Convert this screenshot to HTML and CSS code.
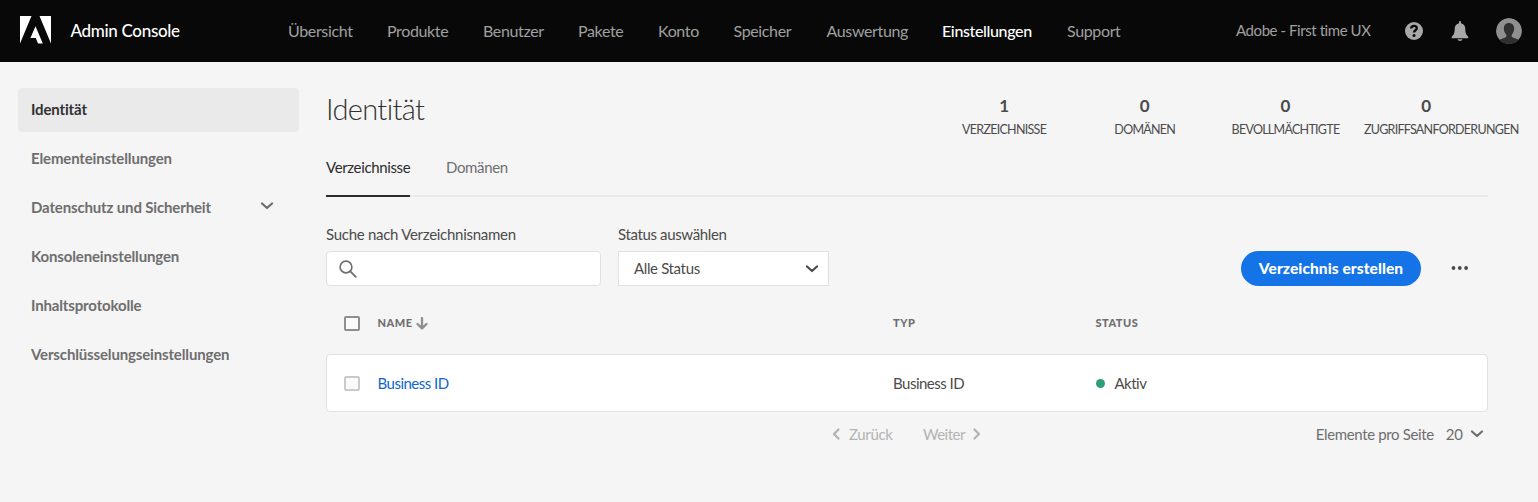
FILE: index.html
```html
<!DOCTYPE html>
<html lang="de">
<head>
<meta charset="utf-8">
<title>Admin Console</title>
<link rel="stylesheet" href="styles.css">
</head>
<body>
<header class="topbar">
  <svg class="logo" width="31" height="28" viewBox="0 0 31 28"><path fill="#fff" d="M0 0h11.500L0 27.500zM19.500 0H31v27.500zM15.500 10.300L22.800 27.500h-4.800l-2.200-5.500H10.400z"/></svg>
  <span class="brand">Admin Console</span>
  <nav class="nav">
    <a>Übersicht</a><a>Produkte</a><a>Benutzer</a><a>Pakete</a><a>Konto</a><a>Speicher</a><a>Auswertung</a><a class="current">Einstellungen</a><a>Support</a>
  </nav>
  <div class="account">
    <span class="org">Adobe - First time UX</span>
    <svg class="help" width="18" height="18" viewBox="0 0 18 18"><circle cx="9" cy="9" r="9" fill="#a8a8a8"/><path d="M6.100 6.500C6.300 4.500 7.500 3.800 9 3.800c1.700 0 2.800 1 2.800 2.400C11.800 8.200 9 8.300 9 10.600" fill="none" stroke="#080808" stroke-width="2.300"/><circle cx="9" cy="13.500" r="1.500" fill="#080808"/></svg>
    <svg class="bell" width="18" height="20" viewBox="0 0 18 20"><path fill="#a8a8a8" d="M8 1a1 1 0 0 1 2 0v1.300c2.800.6 4.300 2.600 4.300 5.500 0 4.400.9 6.300 3 7.900v1.500H.7v-1.500c2.100-1.600 3-3.500 3-7.900C3.700 4.900 5.200 2.900 8 2.300zM6.500 18.200h5c-.4 1-1.300 1.700-2.500 1.700s-2.100-.7-2.500-1.700z"/></svg>
    <svg width="26" height="26" viewBox="0 0 26 26"><defs><clipPath id="face"><circle cx="13" cy="13" r="13"/></clipPath></defs><g clip-path="url(#face)"><circle cx="13" cy="13" r="13" fill="#8f8f8f"/><path fill="#303030" d="M13 5c3.200 0 5.200 2.200 5.200 5.600 0 2.400-1 4.300-2.200 5.800-.8 1.100-.4 2.600.8 3.100L22 21.500V27H4v-5.500l5.200-2c1.200-.5 1.600-2 .8-3.100-1.200-1.500-2.200-3.400-2.200-5.800C7.800 7.200 9.800 5 13 5z"/></g></svg>
  </div>
</header>
<div class="page">
  <aside class="side">
    <a class="side-item selected">Identität</a>
    <a class="side-item">Elementeinstellungen</a>
    <a class="side-item">Datenschutz und Sicherheit<svg width="14" height="8" viewBox="0 0 14 8"><path class="chev" d="M2 1.500l5 4.500 5-4.500"/></svg></a>
    <a class="side-item">Konsoleneinstellungen</a>
    <a class="side-item">Inhaltsprotokolle</a>
    <a class="side-item">Verschlüsselungseinstellungen</a>
  </aside>
  <main class="main">
    <div class="heading">
      <h1>Identität</h1>
      <div class="stats">
        <div class="stat"><b>1</b><span>VERZEICHNISSE</span></div>
        <div class="stat"><b>0</b><span>DOMÄNEN</span></div>
        <div class="stat"><b>0</b><span>BEVOLLMÄCHTIGTE</span></div>
        <div class="stat"><b>0</b><span class="wide">ZUGRIFFSANFORDERUNGEN</span></div>
      </div>
    </div>
    <div class="tabs"><a class="tab active">Verzeichnisse</a><a class="tab">Domänen</a></div>
    <div class="tools">
      <div class="field search"><label>Suche nach Verzeichnisnamen</label>
        <div class="box"><svg width="18" height="18" viewBox="0 0 18 18"><circle cx="7" cy="7" r="5.900" fill="none" stroke="#6e6e6e" stroke-width="1.600"/><path d="M11.300 11.300l5.500 5.500" stroke="#6e6e6e" stroke-width="1.800" stroke-linecap="round"/></svg></div></div>
      <div class="field pick"><label>Status auswählen</label>
        <div class="box"><span class="value">Alle Status</span><svg width="14" height="8" viewBox="0 0 14 8"><path class="chev dark" d="M2 1.500l5 4.500 5-4.500"/></svg></div></div>
      <button class="create">Verzeichnis erstellen</button>
      <svg class="more" width="18" height="4" viewBox="0 0 18 4"><g fill="#4b4b4b"><circle cx="2.500" cy="2" r="1.900"/><circle cx="8.800" cy="2" r="1.900"/><circle cx="15.100" cy="2" r="1.900"/></g></svg>
    </div>
    <div class="row head">
      <i class="check"></i>
      <span class="sort">NAME<svg width="12" height="13" viewBox="0 0 12 13"><path d="M6 1v10M1.500 7L6 11.300 10.500 7" fill="none" stroke="#8e8e8e" stroke-width="2.300" stroke-linecap="round" stroke-linejoin="round"/></svg></span>
      <span>TYP</span><span>STATUS</span>
    </div>
    <div class="row item">
      <i class="check faint"></i>
      <a class="link">Business ID</a><span>Business ID</span><span class="state"><i class="dot"></i>Aktiv</span>
    </div>
    <div class="pager">
      <span class="prev"><svg width="8" height="12" viewBox="0 0 8 12"><path class="chev pale" d="M6.500 1.500L2 6l4.500 4.500"/></svg>Zurück</span>
      <span class="next">Weiter<svg width="8" height="12" viewBox="0 0 8 12"><path class="chev pale" d="M1.500 1.500L6 6l-4.500 4.500"/></svg></span>
      <span class="size">Elemente pro Seite<span class="num">20</span><svg width="14" height="8" viewBox="0 0 14 8"><path class="chev" d="M2 1.500l5 4.500 5-4.500"/></svg></span>
    </div>
  </main>
</div>
</body>
</html>
```
FILE: styles.css
```css
* { box-sizing: border-box; }
body {
  margin: 0;
  height: 502px;
  overflow: hidden;
  background: #f5f5f5;
  color: #4b4b4b;
  font: 15px/20px Lato, "Noto Sans", sans-serif;
  font-variant-ligatures: none;
  letter-spacing: -.36px;
  white-space: nowrap;
}
svg { flex: none; display: block; }
.chev { fill: none; stroke: #6e6e6e; stroke-width: 2.2; stroke-linecap: round; stroke-linejoin: round; }
.chev.dark { stroke: #4b4b4b; }
.chev.pale { stroke: #b3b3b3; }

.topbar { display: flex; align-items: center; height: 62px; padding: 0 16px 0 20px; background: #080808; }
.logo { margin-bottom: 2px; }
.brand { width: 217.500px; margin-left: 19.500px; color: #fff; font-size: 17px; font-weight: 500; letter-spacing: -.32px; }
.nav { display: grid; grid-template-columns: 99px 96px 95px 80px 75.500px 93px 115.500px 125px auto; font-size: 16px; color: #a0a0a0; letter-spacing: -.36px; }
.nav .current { color: #fff; font-weight: 500; }
.account { display: flex; align-items: center; margin-left: auto; color: #a0a0a0; }
.org { margin: -3px 34.500px 0 0; letter-spacing: -.43px; }
.help { margin-right: 28px; }
.bell { margin-right: 27px; }

.page { display: flex; padding: 26px 50px 0 18px; }
.side { width: 281px; display: flex; flex-direction: column; gap: 5px; margin-right: 27px; }
.side-item { display: flex; justify-content: space-between; align-items: center; height: 44px; padding: 0 25px 2px 13px; border-radius: 4px; font-weight: 700; letter-spacing: -.15px; color: #6e6e6e; }
.side-item svg { margin-top: -3px; }
.selected { background: #eaeaea; color: #323232; }

.main { width: 1162px; }
.heading { display: flex; justify-content: space-between; height: 62px; }
h1 { margin: 1px 0 0; font-size: 29px; line-height: 40px; font-weight: 300; letter-spacing: -.65px; color: #323232; }
.stats { display: grid; grid-template-columns: repeat(4, 140.700px); margin: 8px -8.500px 0 0; }
.stat { display: flex; flex-direction: column; align-items: center; font-size: 12.500px; letter-spacing: -.72px; }
.stat b { font-size: 17px; height: 24px; letter-spacing: 0; }
.stat span { line-height: 19px; }
.stat .wide { margin-left: 30px; }
.tabs { display: flex; gap: 36px; height: 47px; border-bottom: 2px solid #eaeaea; }
.tab { height: 47px; padding-top: 7px; color: #6e6e6e; }
.tab.active { width: 84px; color: #2c2c2c; border-bottom: 2px solid #2c2c2c; }

.tools { display: flex; align-items: flex-end; height: 89px; }
.field label { display: block; height: 27px; }
.box { display: flex; align-items: center; height: 35px; background: #fff; border: 1px solid #e1e1e1; }
.search { width: 275px; letter-spacing: -.28px; }
.search .box { border-radius: 4px; padding-left: 12px; }
.pick { width: 211px; margin-left: 17px; }
.pick .box { justify-content: space-between; padding: 0 9px 0 15px; }
.value { padding-bottom: 2px; }
.create { width: 180px; height: 35px; padding: 0 0 1px; margin-left: 412px; border: 0; border-radius: 18px; background: #1473e6; color: #fff; font: 900 15.500px/20px Lato, sans-serif; letter-spacing: .07px; }
.more { margin: 0 0 16px 30px; }

.row { display: grid; grid-template-columns: 33.500px 515.500px 202.500px auto; align-items: center; padding-left: 18px; }
.head { height: 68px; font-size: 11px; font-weight: 900; letter-spacing: .5px; color: #6e6e6e; margin-top: 3px; margin-bottom: -3px; }
.sort { display: flex; align-items: center; gap: 3.500px; }
.check { width: 16px; height: 15px; border: 2px solid #8e8e8e; border-radius: 2px; background: #fafafa; }
.check.faint { border-color: #cacaca; }
.item { height: 58px; padding-left: 17px; background: #fff; border: 1px solid #e1e1e1; border-radius: 4px; letter-spacing: -.5px; }
.link { color: #0d66d0; }
.state { display: flex; align-items: center; gap: 9.500px; }
.dot { width: 9px; height: 9px; margin-left: .5px; border-radius: 50%; background: #2d9d78; }
.pager { display: flex; align-items: center; height: 46px; padding: 0 4px 2px 506px; color: #b3b3b3; }
.prev, .next, .size { display: flex; align-items: center; }
.prev { gap: 9px; width: 91px; }
.next { gap: 8px; letter-spacing: -.5px; }
.size { margin-left: auto; color: #6e6e6e; }
.num { margin: 0 7.500px 0 12px; }
```
